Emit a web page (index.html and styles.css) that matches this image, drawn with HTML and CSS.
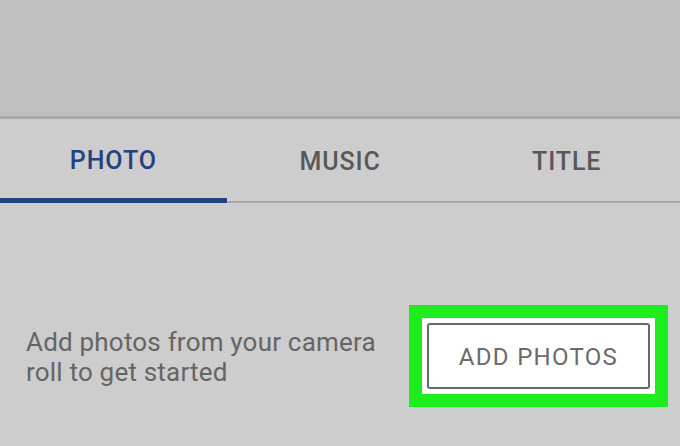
FILE: index.html
```html
<!DOCTYPE html>
<html>
<head>
<title>Slideshow</title>
<link rel="stylesheet" href="styles.css">
</head>
<body>
<div class="header"></div>
<div class="tabs">
<div class="tab active">PHOTO</div>
<div class="tab">MUSIC</div>
<div class="tab">TITLE</div>
</div>
<div class="content">
<p class="hint">Add photos from your camera<br>roll to get started</p>
<div class="highlight">
<div class="inner">
<button class="add">ADD PHOTOS</button>
</div>
</div>
</div>
</body>
</html>
```
FILE: styles.css
```css
*{
margin: 0;
padding: 0;
box-sizing: border-box;
}
body{
width: 680px;
height: 446px;
background: #cdcdcd;
font-family: Roboto, "Liberation Sans", sans-serif;
overflow: hidden;
}
.header{
height: 119px;
background: #bfbfc1;
border-bottom: 3px solid #a9a9ab;
}
.tabs{
display: flex;
}
.tab{
flex: 1;
height: 84px;
display: flex;
align-items: center;
justify-content: center;
padding-top: 2px;
font-size: 25px;
font-weight: 500;
letter-spacing: 0.9px;
color: #58585a;
border-bottom: 2px solid #a8a8a8;
}
.tab.active{
color: #23427f;
border-bottom: 5px solid #23427f;
padding-top: 3px;
}
.content{
display: flex;
align-items: center;
justify-content: space-between;
padding: 102px 12px 0 26px;
}
.hint{
font-size: 26px;
line-height: 30px;
letter-spacing: 0.2px;
color: #656565;
margin-top: 2px;
}
.highlight{
background: #1ded1d;
padding: 13px;
}
.inner{
background: #fff;
padding: 5px;
}
.add{
display: block;
width: 223px;
height: 66px;
background: #fff;
border: 2px solid #6a6a6a;
border-radius: 3px;
font-family: Roboto, "Liberation Sans", sans-serif;
font-size: 24px;
color: #6b6b6b;
letter-spacing: 1.3px;
padding-top: 2px;
}
```
